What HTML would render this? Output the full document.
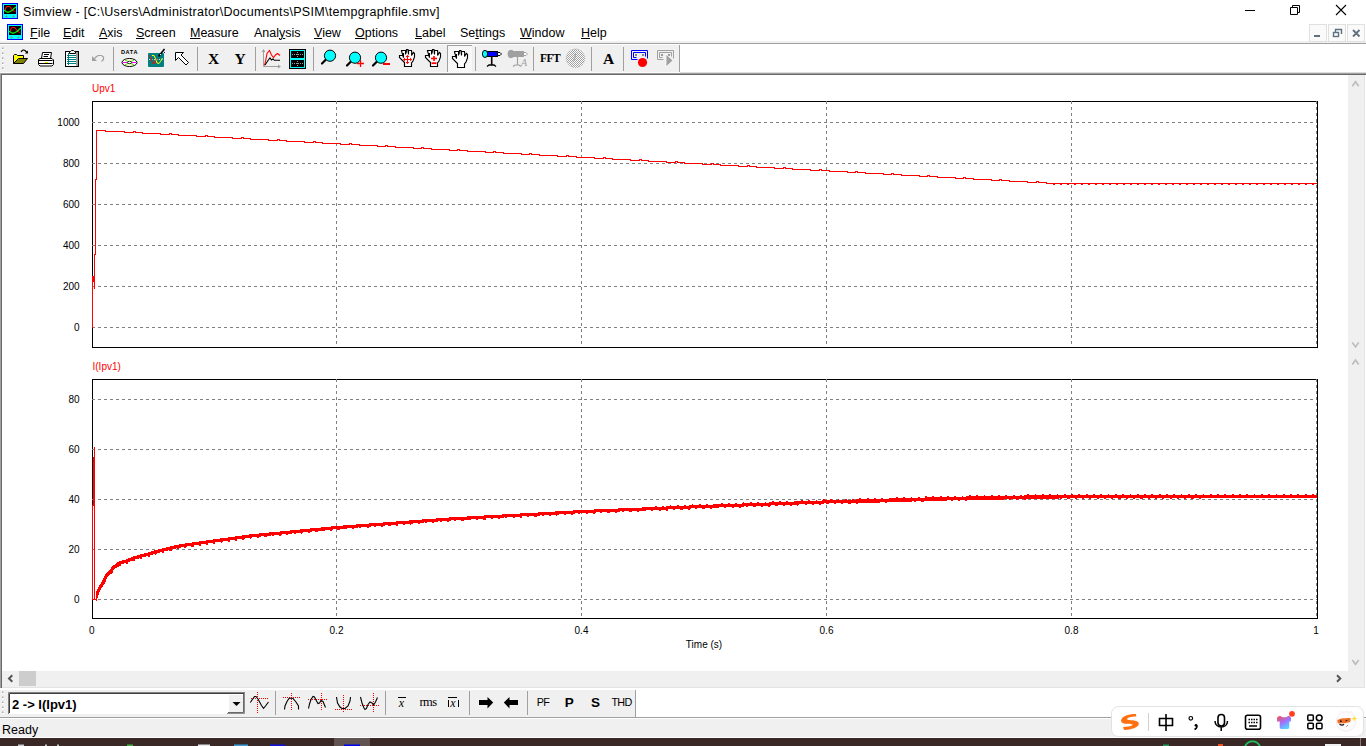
<!DOCTYPE html>
<html><head><meta charset="utf-8">
<style>
html,body{margin:0;padding:0;width:1366px;height:746px;overflow:hidden;background:#fff;font-family:"Liberation Sans",sans-serif;}
.a{position:absolute;}
.t{position:absolute;white-space:nowrap;line-height:1;}
.menu{font-size:12.5px;color:#000;top:27px;}
.menu u{text-decoration:underline;text-decoration-thickness:1px;text-underline-offset:1px;}
svg{position:absolute;left:0;top:0;}
.g{stroke:#808080;stroke-width:1;stroke-dasharray:3 3;shape-rendering:crispEdges;}
.fr{fill:none;stroke:#000;stroke-width:1;shape-rendering:crispEdges;}
.lab{font-size:10px;fill:#000;font-family:"Liberation Sans",sans-serif;}
</style></head><body>
<!-- title bar -->
<div class="a" style="left:0;top:0;width:1366px;height:22px;background:#fff"></div>
<div class="t" style="left:23px;top:6px;font-size:12.5px;letter-spacing:0.3px;color:#000">Simview - [C:\Users\Administrator\Documents\PSIM\tempgraphfile.smv]</div>
<!-- menu bar -->
<div class="a" style="left:0;top:41px;width:1366px;height:2px;background:#f0f0f0"></div>
<div class="a" style="left:0;top:43px;width:1366px;height:1px;background:#a0a0a0"></div>
<div class="t menu" style="left:30px"><u>F</u>ile</div>
<div class="t menu" style="left:63px"><u>E</u>dit</div>
<div class="t menu" style="left:99px"><u>A</u>xis</div>
<div class="t menu" style="left:136px"><u>S</u>creen</div>
<div class="t menu" style="left:190px"><u>M</u>easure</div>
<div class="t menu" style="left:254px">Anal<u>y</u>sis</div>
<div class="t menu" style="left:314px"><u>V</u>iew</div>
<div class="t menu" style="left:355px"><u>O</u>ptions</div>
<div class="t menu" style="left:415px"><u>L</u>abel</div>
<div class="t menu" style="left:460px">Se<u>t</u>tings</div>
<div class="t menu" style="left:520px"><u>W</u>indow</div>
<div class="t menu" style="left:581px"><u>H</u>elp</div>
<!-- toolbar -->
<div class="a" style="left:0;top:45px;width:679px;height:27px;background:#f0f0f0"></div>
<div class="a" style="left:679px;top:45px;width:1px;height:27px;background:#a0a0a0"></div>
<div class="a" style="left:0;top:72px;width:680px;height:1px;background:#fafafa"></div>
<div class="a" style="left:680px;top:72px;width:686px;height:1px;background:#dcdcdc"></div>
<div class="a" style="left:0;top:73px;width:1366px;height:1px;background:#a0a0a0"></div>
<div class="a" style="left:0;top:74px;width:1366px;height:1px;background:#696969"></div>
<!-- client -->
<div class="a" style="left:0;top:73px;width:1px;height:615px;background:#a0a0a0"></div>
<div class="a" style="left:1px;top:74px;width:1px;height:614px;background:#696969"></div>
<!-- vscroll -->
<div class="a" style="left:1348px;top:75px;width:17px;height:596px;background:#f0f0f0"></div>
<div class="a" style="left:1365px;top:75px;width:1px;height:613px;background:#fff"></div>
<!-- hscroll -->
<div class="a" style="left:2px;top:671px;width:1363px;height:16px;background:#f0f0f0"></div>
<div class="a" style="left:2px;top:687px;width:1363px;height:1px;background:#e3e3e3"></div>
<div class="a" style="left:1364px;top:75px;width:1px;height:613px;background:#e3e3e3"></div>
<div class="a" style="left:19px;top:671px;width:17px;height:15px;background:#cdcdcd"></div>
<!-- bottom toolbar -->
<div class="a" style="left:0;top:690px;width:636px;height:27px;background:#f0f0f0"></div>
<div class="a" style="left:0;top:717px;width:1366px;height:1px;background:#a0a0a0"></div>
<div class="a" style="left:0;top:718px;width:1366px;height:1px;background:#fff"></div>
<div class="a" style="left:0;top:719px;width:1366px;height:18px;background:#f0f0f0"></div>
<div class="a" style="left:0;top:737px;width:1366px;height:1px;background:#fff"></div>
<div class="t" style="left:2px;top:724px;font-size:12.5px;color:#000">Ready</div>
<!-- taskbar -->
<div class="a" style="left:0;top:738px;width:1366px;height:8px;background:#3a2826"></div>

<svg width="1366" height="746" viewBox="0 0 1366 746">
<!-- title icon -->
<g id="appicon">
<rect x="2.5" y="3.5" width="15" height="15" fill="#0ff" stroke="#00f"/>
<rect x="4" y="5" width="12" height="9" fill="#000"/>
<path d="M5.5,10.5 L5.5,8.5 L7,6.5 L9.5,6.5 L12,9.3 L13.5,11 L15.5,11.3" fill="none" stroke="#f00" stroke-width="1.1"/>
<path d="M4,10 L6,11.5 L8,12.3 L10,11.5 L12.5,10.2 L14,8.5 L16,6.8" fill="none" stroke="#0f0" stroke-width="1.1"/>
<path d="M5.5,16.5H7.5M6.5,15.5V17.5M12.5,16.5H14.5M13.5,15.5V17.5" stroke="#888" stroke-width="1"/>
</g>
<use href="#appicon" x="5" y="21"/>
<!-- gripper -->
<rect x="2" y="48.0" width="2" height="2" fill="#fff"/><rect x="2" y="47.5" width="1.5" height="1.5" fill="#a8a8a8"/>
<rect x="2" y="53.0" width="2" height="2" fill="#fff"/><rect x="2" y="52.5" width="1.5" height="1.5" fill="#a8a8a8"/>
<rect x="2" y="58.0" width="2" height="2" fill="#fff"/><rect x="2" y="57.5" width="1.5" height="1.5" fill="#a8a8a8"/>
<rect x="2" y="63.0" width="2" height="2" fill="#fff"/><rect x="2" y="62.5" width="1.5" height="1.5" fill="#a8a8a8"/>
<rect x="2" y="68.0" width="2" height="2" fill="#fff"/><rect x="2" y="67.5" width="1.5" height="1.5" fill="#a8a8a8"/>
<rect x="2" y="692.0" width="2" height="2" fill="#fff"/><rect x="2" y="691.5" width="1.5" height="1.5" fill="#a8a8a8"/>
<rect x="2" y="697.0" width="2" height="2" fill="#fff"/><rect x="2" y="696.5" width="1.5" height="1.5" fill="#a8a8a8"/>
<rect x="2" y="702.0" width="2" height="2" fill="#fff"/><rect x="2" y="701.5" width="1.5" height="1.5" fill="#a8a8a8"/>
<rect x="2" y="707.0" width="2" height="2" fill="#fff"/><rect x="2" y="706.5" width="1.5" height="1.5" fill="#a8a8a8"/>
<rect x="2" y="712.0" width="2" height="2" fill="#fff"/><rect x="2" y="711.5" width="1.5" height="1.5" fill="#a8a8a8"/>
<!-- separators -->
<g fill="#a0a0a0">
<rect x="113" y="47" width="1" height="24"/>
<rect x="197" y="47" width="1" height="24"/>
<rect x="255" y="47" width="1" height="24"/>
<rect x="313" y="47" width="1" height="24"/>
<rect x="475" y="47" width="1" height="24"/>
<rect x="533" y="47" width="1" height="24"/>
<rect x="591" y="47" width="1" height="24"/>
<rect x="623" y="47" width="1" height="24"/>
<rect x="275" y="691" width="1" height="24"/>
<rect x="385" y="691" width="1" height="24"/>
<rect x="469" y="691" width="1" height="24"/>
<rect x="527" y="691" width="1" height="24"/>
</g>
<!-- open -->
<g>
<path d="M13.5,63.5V55.5L14.5,54.5H16.5L17.5,55.5H23.5V58.5" fill="#ff0" stroke="#000"/>
<path d="M13.5,63.5 L18.5,58.5 H27.5 L23.5,63.5 Z" fill="#808000" stroke="#000"/>
<path d="M21,52 Q23,49 25,50.5 L27,52.5" fill="none" stroke="#000" stroke-width="1.2"/>
<path d="M25,53.5 H28 V50.5 Z" fill="#000"/>
</g>
<!-- print -->
<g>
<path d="M41.5,58.5 L42.5,52.5 H51.5 L50.5,58.5" fill="#fff" stroke="#000"/>
<path d="M44,54.5H49M43.5,56.5H48" stroke="#000"/>
<path d="M38.5,59.5 L40,58.5 H52 L53.5,60 V64.5 L52,66 H40 L38.5,64.5 Z" fill="#fff" stroke="#000"/>
<path d="M39,60.5H52.5M39,63.5H52.5" stroke="#000"/>
<rect x="45" y="62" width="3" height="1" fill="#ee0"/>
</g>
<!-- clipboard -->
<g>
<rect x="65.5" y="51.5" width="13" height="15" fill="#fff" stroke="#000"/>
<rect x="76" y="52" width="2" height="14" fill="#a0a0a0"/>
<path d="M69.5,53.5 V51.5 H70.5 L71.5,50.5 H73.5 L74.5,51.5 H75.5 V53.5 Z" fill="#fff" stroke="#000"/>
<path d="M67,55.5H76M67,57.5H76M67,59.5H76M67,61.5H76M67,63.5H76M68.5,53V65" stroke="#008080"/>
</g>
<!-- undo gray -->
<g>
<path d="M92,56 V61 H97 Z" fill="#a0a0a0"/>
<path d="M94.5,58.5 L96.5,56.5 L98.5,55.5 H101.5 L103.5,57 V59.5 L101.5,61.5" fill="none" stroke="#a0a0a0" stroke-width="1.2"/>
</g>
<!-- DATA -->
<g>
<text x="129.5" y="54" font-family="Liberation Sans" font-weight="bold" font-size="5.6" text-anchor="middle" letter-spacing="0.6" fill="#000">DATA</text>
<ellipse cx="129.5" cy="62.5" rx="7.5" ry="4" fill="#fff" stroke="#000"/>
<path d="M123,62.5H136" stroke="#f0f" stroke-width="1"/>
<path d="M125,60L134,65M125,65L134,60" stroke="#0c0" stroke-width="0.8"/>
<path d="M127,59.5L132,65.5M127,65.5L132,59.5" stroke="#ff0" stroke-width="0.9"/>
<ellipse cx="129.5" cy="62.5" rx="2" ry="1.2" fill="#fff" stroke="#000" stroke-width="0.8"/>
</g>
<!-- teal scope -->
<g>
<rect x="148" y="53" width="16" height="14" rx="1" fill="#008080"/>
<path d="M149,59.5H163" stroke="#fff" stroke-dasharray="1 1.5" stroke-width="0.8"/>
<path d="M149.5,55.5 L151.5,60 L153,63.5 H154.5 L156,60 L157.5,58.5" fill="none" stroke="#f00" stroke-width="1"/>
<path d="M152,55.5 H154 L155.5,58.5 L157,63 L159,63.5 L160.5,61.5 L162.5,58" fill="none" stroke="#ff0" stroke-width="1"/>
<path d="M158.5,56.5 L164.5,49" stroke="#000" stroke-width="1.6"/>
<rect x="160" y="54" width="1" height="1" fill="#fff"/>
<rect x="164" y="52" width="1" height="1" fill="#00f"/>
</g>
<!-- pointer -->
<path d="M175.5,52.5 H183.5 L181,55 L188.5,62.5 L186,65 L178.5,57.5 L175.5,60.5 Z" fill="#fff" stroke="#000"/>
<!-- X Y -->
<text x="213.5" y="64" font-family="Liberation Serif" font-weight="bold" font-size="15.5" text-anchor="middle" fill="#000">X</text>
<text x="240" y="64" font-family="Liberation Serif" font-weight="bold" font-size="15.5" text-anchor="middle" fill="#000">Y</text>
<!-- graph -->
<g>
<path d="M263.5,66.5V50M263.5,66.5H280" stroke="#a0a0a0" stroke-width="1"/>
<path d="M261.5,52 L263.5,49 L265.5,52 Z M278,64.5 L281,66.5 L278,68.5 Z" fill="#a0a0a0"/>
<path d="M264.5,65.5 L266,59 L267,53.5 L269.5,50.5 L271.5,55 L273.5,57.5 L275.5,55 L277.5,53.5 L280,55.5" fill="none" stroke="#f00" stroke-width="1.1"/>
<path d="M265,65 L268,60.5 L270,58 L271.5,60 L273,59 L274.5,60.3 H280" fill="none" stroke="#000" stroke-width="1.1"/>
</g>
<!-- panel -->
<g>
<rect x="289" y="49" width="17" height="20" fill="#000"/>
<rect x="290" y="50" width="15" height="18" fill="#0ff"/>
<rect x="291" y="51" width="13" height="7" fill="#000"/>
<rect x="291" y="60" width="13" height="7" fill="#000"/>
<path d="M292,54.5H304M292,63.5H304M297.5,52V58M297.5,61V67" stroke="#999" stroke-width="1" stroke-dasharray="1 1"/>
</g>
<!-- magnifiers -->
<g id="mag">
<path d="M326,59.5 L322,63.5" stroke="#000" stroke-width="2.2" stroke-linecap="round"/>
<circle cx="330" cy="55.7" r="5.6" fill="#0ff" stroke="#000" stroke-width="1"/>
</g>
<use href="#mag" x="25" y="2"/>
<path d="M357,63.5H364M360.5,60V67" stroke="#f00" stroke-width="1.3"/>
<use href="#mag" x="51" y="2"/>
<rect x="383" y="63" width="7" height="2" fill="#f00"/>
<!-- pressed button -->
<defs>
<pattern id="chk" width="2" height="2" patternUnits="userSpaceOnUse"><rect width="2" height="2" fill="#f0f0f0"/><rect width="1" height="1" fill="#fff"/><rect x="1" y="1" width="1" height="1" fill="#fff"/></pattern>
<pattern id="chk2" width="2" height="2" patternUnits="userSpaceOnUse"><rect width="2" height="2" fill="#fff"/><rect width="1" height="1" fill="#a0a0a0"/><rect x="1" y="1" width="1" height="1" fill="#a0a0a0"/></pattern>
</defs>
<rect x="447" y="45" width="25" height="27" fill="url(#chk)"/>
<rect x="447" y="45" width="25" height="1" fill="#a0a0a0"/>
<rect x="447" y="45" width="1" height="27" fill="#a0a0a0"/>
<!-- hands -->
<g id="hand">
<path d="M452.5,56.5 L456,56.5 L456.5,58.5 L455,53.5 L454.5,51.5 L458.5,51.5 L459,54.5 L459.5,50.5 L461,50.5 L461.5,55 L461.5,51.5 L464.5,51.5 L465,55.5 L466.5,53.5 L467.5,54.5 L467.5,58 L466,62 L464.5,64 L464.5,67.5 L457.5,67.5 L457.5,63.5 L452.5,58.5 Z" fill="#fff" stroke="#000" stroke-width="1.15"/>
<path d="M458.5,51.5V55.5M461.5,51V55.5M464.7,54V56.5M456.5,54V58.5" stroke="#000" stroke-width="1.1"/>
</g>
<use href="#hand" x="-53" y="-1"/>
<path d="M403.5,59.5H411.5M407.5,55.5V63.5" stroke="#f00" stroke-width="1.1"/>
<path d="M403,59.5l2,-2v4zM412,59.5l-2,-2v4zM407.5,55l-2,2h4zM407.5,64l-2,-2h4z" fill="#f00"/>
<use href="#hand" x="-27" y="-1"/>
<path d="M431,58.5H437M434,56V61" stroke="#f00" stroke-width="1.6"/>
<rect x="431.5" y="62.3" width="5" height="1.8" fill="#f00"/>
<!-- telescope -->
<g>
<path d="M491.7,56V65" stroke="#000" stroke-width="1.6"/><path d="M487,66.5 L489,65 H494 L496,66.5" stroke="#000" stroke-width="1.3" fill="none" stroke-linejoin="miter"/>
<rect x="487.5" y="51.5" width="10" height="5" fill="#00f" stroke="#000"/>
<path d="M497.5,52.5 H500 L501.5,54 L500,55.5 H497.5 Z" fill="#fff" stroke="#000" stroke-width="1"/>
<ellipse cx="485" cy="53.9" rx="2.6" ry="3.6" fill="#0ff" stroke="#000" stroke-width="1"/>
</g>
<g fill="#a0a0a0" stroke="#a0a0a0">
<path d="M517.5,56V64.5M513,66.5 L515,65 H519 L521,66.5" stroke-width="1.2" fill="none"/>
<rect x="513.5" y="51.5" width="10" height="5"/>
<path d="M523.5,52.5 H526 L527.5,54 L526,55.5 H523.5 Z" fill="#fff"/>
<ellipse cx="511" cy="54" rx="3" ry="3.8" stroke-width="1"/>
</g>
<text x="521" y="66" font-family="Liberation Serif" font-style="italic" font-size="10" fill="#a0a0a0">A</text>
<!-- FFT -->
<text x="550" y="62" font-family="Liberation Serif" font-weight="bold" font-size="11.5" text-anchor="middle" letter-spacing="-0.6" fill="#000">FFT</text>
<circle cx="575.5" cy="58.3" r="9.3" fill="url(#chk2)" stroke="#a8a8a8" stroke-width="0.8" stroke-dasharray="1 1"/><path d="M575.5,53.3 L575,57.5 L573.5,60.5" stroke="#a0a0a0" stroke-width="1.1" fill="none"/>
<!-- A -->
<text x="608.5" y="64" font-family="Liberation Serif" font-weight="bold" font-size="15.5" text-anchor="middle" fill="#000">A</text>
<!-- record -->
<g id="rec" fill="none" stroke="#00f">
<path d="M637.5,59.5H631.5V50.5H647.5V58.5"/>
<path d="M636.5,57.5H633.5V52.5H645.5V56.5"/>
</g>
<rect x="635" y="54" width="2" height="2" fill="#888"/><rect x="642" y="54" width="2" height="2" fill="#888"/>
<circle cx="642.5" cy="62.5" r="4.6" fill="#f00"/>
<g fill="none" stroke="#a0a0a0">
<path d="M663.5,59.5H657.5V50.5H673.5V58.5"/>
<path d="M662.5,57.5H659.5V52.5H671.5V56.5"/>
</g>
<rect x="661" y="54" width="2" height="2" fill="#999"/><rect x="668" y="54" width="2" height="2" fill="#999"/>
<path d="M666,54 V67 L673,60.5 Z" fill="#a0a0a0" stroke="#fff" stroke-width="0.8"/>
<!-- window buttons -->
<path d="M1245,10.5H1255" stroke="#000" stroke-width="1"/>
<path d="M1290.5,7.5H1297.5V14.5H1290.5Z M1292.5,7.5V5.5H1299.5V12.5H1297.5" fill="none" stroke="#000" stroke-width="1"/>
<path d="M1336,5 L1346,15 M1346,5 L1336,15" stroke="#000" stroke-width="1.1"/>
<!-- MDI buttons -->
<g fill="#fafafa" stroke="#e0e0e0">
<rect x="1309.5" y="24.5" width="17" height="17"/>
<rect x="1328.5" y="24.5" width="17" height="17"/>
<rect x="1347.5" y="24.5" width="17" height="17"/>
</g>
<rect x="1314" y="35" width="6" height="2" fill="#5f7080"/>
<path d="M1335.5,32 V29.5 H1341.5 V34" fill="none" stroke="#5f7080" stroke-width="1.4"/>
<rect x="1333.5" y="32.5" width="5" height="4" fill="none" stroke="#5f7080" stroke-width="1.4"/>
<path d="M1353,30 L1359.5,36.5 M1359.5,30 L1353,36.5" stroke="#5f7080" stroke-width="1.8"/>

<!-- scroll arrows -->
<path d="M12.3,675.2 L9,678.5 L12.3,681.8" fill="none" stroke="#555" stroke-width="2"/>
<path d="M1337,675.2 L1340.3,678.5 L1337,681.8" fill="none" stroke="#555" stroke-width="2"/>
<path d="M1352.3,86.3 L1355.5,81.8 L1358.7,86.3" fill="none" stroke="#bdbdbd" stroke-width="1.7"/>
<path d="M1352.3,342.4 L1355.5,346.9 L1358.7,342.4" fill="none" stroke="#bdbdbd" stroke-width="1.7"/>
<path d="M1352.3,364.4 L1355.5,359.9 L1358.7,364.4" fill="none" stroke="#bdbdbd" stroke-width="1.7"/>
<path d="M1352.3,660 L1355.5,664.3 L1358.7,660" fill="none" stroke="#bdbdbd" stroke-width="1.7"/>
<!-- combo -->
<rect x="8" y="692" width="237" height="22" fill="#fff"/>
<path d="M8.5,714V692.5H245" stroke="#808080" fill="none"/>
<path d="M9.5,713V693.5H244" stroke="#404040" fill="none"/>
<rect x="228" y="694" width="16" height="19" fill="#f0f0f0"/>
<path d="M228.5,712V694.5H243" stroke="#fff" fill="none"/>
<path d="M228,712.5H243.5V694" stroke="#696969" fill="none"/>
<path d="M227,713.5H244.5V693" stroke="#404040" fill="none" opacity="0.6"/>
<path d="M232.5,702 H240.5 L236.5,706 Z" fill="#000"/>
<text x="12" y="709" font-family="Liberation Sans" font-weight="bold" font-size="13" fill="#000">2 -&gt; I(Ipv1)</text>
<!-- sine -->
<g fill="none" stroke="#f00" stroke-width="1" stroke-dasharray="1 1">
<path d="M257.5,692V713M251,698.5H268"/>
<path d="M291.5,693V710M283,697.5H300"/>
<path d="M321.5,693V711M308,699.5H327"/>
<path d="M343.5,695V713M335,709.5H352"/>
<path d="M373.5,693V712M360,705.5H379"/>
</g>
<g fill="none" stroke="#000" stroke-width="1.1">
<path d="M250.3,702.5 L254.5,696.5 H256 L258,699 L261.5,705.5 L263.5,708.3 L265.5,706 L268.5,702"/>
<path d="M284.5,709.5 L285,706 L287,701.5 L289,698.5 L291,698 L293,698.5 L296,702 L298.5,706 L298.5,709.5"/>
<path d="M308.5,708.5 L309.5,704 L311,699.5 L313,696.5 L314.5,697 L316,700 L318,703.5 L319.5,703 L321,700.5 L323,701.5 L325.5,707.5"/>
<path d="M336.5,697 L337.5,703 L340,707 L342,708.5 H345 L348,706 L350,701 L350.5,697"/>
<path d="M360.5,697 L362,703 L364,708 L365,709.5 L366.5,708.5 L368,704.5 L370,702 L372,703 L373.5,705 L375.5,702 L377.5,697.5"/>
</g>
<!-- xbar rms |xbar| -->
<path d="M398,697.5H406M448,697.5H457" stroke="#000" stroke-width="1"/>
<text x="401.5" y="707" font-family="Liberation Serif" font-style="italic" font-size="12" text-anchor="middle" fill="#000">x</text>
<text x="428" y="706" font-family="Liberation Serif" font-size="12.5" text-anchor="middle" letter-spacing="-0.5" fill="#000">rms</text>
<text x="453" y="707" font-family="Liberation Serif" font-style="italic" font-size="12" text-anchor="middle" fill="#000">x</text>
<path d="M448.5,700V707M458.5,700V707" stroke="#000" stroke-width="1"/>
<!-- arrows -->
<path d="M479,700 H487.5 V697 L493.2,702.5 L487.5,708.5 V705 H479 Z" fill="#000"/>
<path d="M518,700 H509.5 V697 L503.8,702.5 L509.5,708.5 V705 H518 Z" fill="#000"/>
<!-- PF P S THD -->
<text x="543" y="706" font-family="Liberation Sans" font-size="10.8" text-anchor="middle" letter-spacing="-0.6" fill="#000">PF</text>
<text x="569.3" y="707" font-family="Liberation Sans" font-weight="bold" font-size="13.5" text-anchor="middle" fill="#000">P</text>
<text x="595.5" y="707" font-family="Liberation Sans" font-weight="bold" font-size="13.5" text-anchor="middle" fill="#000">S</text>
<text x="621.5" y="706" font-family="Liberation Sans" font-size="10.8" text-anchor="middle" letter-spacing="-0.7" fill="#000">THD</text>
<rect x="635" y="690" width="1" height="27" fill="#a0a0a0"/>
<!-- taskbar bits -->
<rect x="334" y="738" width="36" height="8" fill="#615351"/>
<rect x="344" y="744.5" width="16" height="1.5" fill="#0000f0"/>
<rect x="18" y="744.5" width="6" height="1.5" fill="#c8c8c8"/>
<rect x="45" y="744.5" width="2" height="1.5" fill="#c8c8c8"/><rect x="57" y="744.5" width="2" height="1.5" fill="#c8c8c8"/>
<rect x="127" y="744.5" width="6" height="1.5" fill="#40b040"/>
<rect x="198" y="744.5" width="12" height="1.5" fill="#e8e8e8"/>
<rect x="234" y="744.5" width="14" height="1.5" fill="#3aa0e0"/>
<rect x="270" y="744.5" width="15" height="1.5" fill="#1010e0"/>
<rect x="1163" y="744.5" width="6" height="1.5" fill="#20a060"/>
<rect x="1218" y="744" width="5" height="2" fill="#f05020"/>
<path d="M1245,746.5 A8,8 0 0 1 1260,746.5" fill="none" stroke="#20c060" stroke-width="1.8"/>
<rect x="1325" y="744" width="16" height="2" fill="#f0f0f0"/>
<rect x="1360" y="738" width="1" height="8" fill="#8a7a78"/>
<!-- IME panel -->
<rect x="1111.5" y="706.5" width="252" height="30" rx="7" fill="#fff" stroke="#e2e2e2"/>
<path d="M1136,714.1 L1136.3,716.4 C1131,716.6 1127,717.5 1127,719.3 C1127.5,720.3 1131,720.2 1134,720.4 C1137.5,720.8 1139,722 1138.8,724 C1138.2,727.5 1132,729.6 1124,730 L1123.1,727 C1128,726.8 1132.5,726 1132.7,724.8 C1132.5,723.6 1128,724 1125,723.7 C1122,723.3 1120.9,722 1121.1,720.5 C1121.5,716.5 1128,714 1136,714.1 Z" fill="#ff7010"/>
<rect x="1148" y="713" width="1" height="18" fill="#d0d0d0"/>
<path d="M1159.5,718.5H1172.5V725.5H1159.5Z M1166,714V731" fill="none" stroke="#000" stroke-width="1.6"/>
<circle cx="1190.8" cy="718.3" r="1.8" fill="none" stroke="#000" stroke-width="1.2"/>
<circle cx="1196" cy="725.3" r="1.4" fill="#000"/><path d="M1197,725.5 C1197.2,727.5 1196,728.8 1194.5,729.5" fill="none" stroke="#000" stroke-width="1.5"/>
<rect x="1218" y="714.5" width="6.5" height="11.5" rx="3.2" fill="none" stroke="#000" stroke-width="1.6"/>
<path d="M1215,721 C1215,729 1227.5,729 1227.5,721 M1221.2,727.5V731" fill="none" stroke="#000" stroke-width="1.5"/>
<rect x="1245.5" y="715.2" width="15" height="14" rx="2" fill="none" stroke="#000" stroke-width="1.6"/>
<path d="M1248.5,719.5h1.5m1,0h1.5m1,0h1.5m1,0h1.5M1248.5,722.5h1.5m1,0h1.5m1,0h1.5m1,0h1.5M1249,726H1257" stroke="#000" stroke-width="1.3"/>
<defs><linearGradient id="shirt" x1="0" y1="0" x2="0.6" y2="1"><stop offset="0" stop-color="#f85040"/><stop offset="0.55" stop-color="#a070ff"/><stop offset="1" stop-color="#50d8ff"/></linearGradient></defs>
<path d="M1277,718 Q1278,715.6 1280.5,716 L1282.5,717.3 H1286 L1288.3,716 Q1290.8,715.6 1291,718 V721.6 H1289.3 V727.6 Q1289.3,729 1287.8,729 H1281.2 Q1279.7,729 1279.7,727.6 V721.6 H1277 Z" fill="url(#shirt)"/>
<circle cx="1292" cy="713.8" r="2.9" fill="#ff4020"/>
<g fill="none" stroke="#000" stroke-width="1.5">
<rect x="1307.8" y="715" width="5.5" height="5.5" rx="1"/>
<circle cx="1319.2" cy="717.8" r="2.9"/>
<rect x="1307.8" y="723.3" width="5.5" height="5.5" rx="1"/>
<rect x="1316.5" y="723.3" width="5.5" height="5.5" rx="1"/>
</g>
<circle cx="1346" cy="721.5" r="9.8" fill="#fefcfc" stroke="#efe4ee" stroke-width="0.7"/>
<path d="M1339,714 L1340.5,711.3 L1343,713 M1349,713 L1351.5,711.3 L1352.5,714" fill="#fff" stroke="#ece6f4" stroke-width="0.7"/>
<path d="M1337.2,720.5 C1337.5,718.8 1344,718 1350.3,718 C1351,719.5 1350.8,721.5 1349.5,722.3 C1345,723.3 1340,723.8 1337.8,723.3 Z" fill="#f07028"/>
<circle cx="1340.8" cy="721.2" r="0.9" fill="#111"/><path d="M1345.5,721 l2,-0.8" stroke="#111" stroke-width="0.9"/>
<path d="M1339.5,724.3 C1341,725.3 1343,725.2 1344,724.3" stroke="#111" stroke-width="1.2" fill="none"/>
<path d="M1346.5,726.5 l1.2,-1.2" stroke="#333" stroke-width="0.7"/>
<path d="M1354.3,715.8 l0.9,2 l2,0.8 l-2,0.8 l-0.9,2 l-0.9,-2 l-2,-0.8 l2,-0.8 z" fill="#ffe040"/>

<rect x="92.5" y="101.5" width="1225" height="246" class="fr"/>
<rect x="92.5" y="379.5" width="1225" height="239" class="fr"/>
<line x1="92" y1="122.5" x2="1317" y2="122.5" class="g"/>
<line x1="92" y1="163.5" x2="1317" y2="163.5" class="g"/>
<line x1="92" y1="204.5" x2="1317" y2="204.5" class="g"/>
<line x1="92" y1="245.5" x2="1317" y2="245.5" class="g"/>
<line x1="92" y1="286.5" x2="1317" y2="286.5" class="g"/>
<line x1="92" y1="327.5" x2="1317" y2="327.5" class="g"/>
<line x1="92" y1="399.5" x2="1317" y2="399.5" class="g"/>
<line x1="92" y1="449.5" x2="1317" y2="449.5" class="g"/>
<line x1="92" y1="499.5" x2="1317" y2="499.5" class="g"/>
<line x1="92" y1="549.5" x2="1317" y2="549.5" class="g"/>
<line x1="92" y1="599.5" x2="1317" y2="599.5" class="g"/>
<line x1="336.5" y1="101" x2="336.5" y2="347" class="g"/>
<line x1="336.5" y1="379" x2="336.5" y2="618" class="g"/>
<line x1="581.5" y1="101" x2="581.5" y2="347" class="g"/>
<line x1="581.5" y1="379" x2="581.5" y2="618" class="g"/>
<line x1="826.5" y1="101" x2="826.5" y2="347" class="g"/>
<line x1="826.5" y1="379" x2="826.5" y2="618" class="g"/>
<line x1="1071.5" y1="101" x2="1071.5" y2="347" class="g"/>
<line x1="1071.5" y1="379" x2="1071.5" y2="618" class="g"/>
<line x1="1316.5" y1="101" x2="1316.5" y2="347" class="g"/>
<line x1="1316.5" y1="379" x2="1316.5" y2="618" class="g"/>
<rect x="92" y="276" width="2" height="6" fill="#f00"/>
<path d="M92.5,327.5V276.5M94.5,289V254.5H95.5V179.5H96.5V130.5H105.5V131.5H124.5V132.5H133.5V131.5H135.5V132.5H142.5V133.5H160.5V134.5H169.5V133.5H171.5V134.5H178.5V135.5H196.5V136.5H205.5V135.5H207.5V136.5H214.5V137.5H232.5V138.5H241.5V137.5H243.5V138.5H250.5V139.5H268.5V140.5H277.5V139.5H279.5V140.5H286.5V141.5H304.5V142.5H313.5V141.5H315.5V142.5H322.5V143.5H340.5V144.5H349.5V143.5H351.5V144.5H359.5V145.5H377.5V146.5H385.5V145.5H387.5V146.5H395.5V147.5H413.5V148.5H421.5V147.5H423.5V148.5H431.5V149.5H449.5V150.5H457.5V149.5H459.5V150.5H467.5V151.5H485.5V152.5H493.5V151.5H495.5V152.5H503.5V153.5H521.5V154.5H529.5V153.5H531.5V154.5H539.5V155.5H557.5V156.5H566.5V155.5H568.5V156.5H576.5V157.5H594.5V158.5H603.5V157.5H605.5V158.5H612.5V159.5H630.5V160.5H639.5V159.5H641.5V160.5H648.5V161.5H666.5V162.5H675.5V161.5H677.5V162.5H684.5V163.5H702.5V164.5H711.5V163.5H713.5V164.5H720.5V165.5H738.5V166.5H747.5V165.5H749.5V166.5H756.5V167.5H774.5V168.5H783.5V167.5H785.5V168.5H792.5V169.5H810.5V170.5H819.5V169.5H821.5V170.5H829.5V171.5H847.5V172.5H855.5V171.5H857.5V172.5H865.5V173.5H883.5V174.5H891.5V173.5H893.5V174.5H901.5V175.5H919.5V176.5H927.5V175.5H929.5V176.5H937.5V177.5H955.5V178.5H963.5V177.5H965.5V178.5H973.5V179.5H991.5V180.5H999.5V179.5H1001.5V180.5H1009.5V181.5H1027.5V182.5H1036.5V181.5H1038.5V182.5H1046.5V183.5H1053.5V184.5H1054.5V183.5H1060.5V184.5H1061.5V183.5H1067.5V184.5H1068.5V183.5H1074.5V184.5H1075.5V183.5H1081.5V184.5H1082.5V183.5H1088.5V184.5H1089.5V183.5H1095.5V184.5H1096.5V183.5H1102.5V184.5H1103.5V183.5H1109.5V184.5H1110.5V183.5H1116.5V184.5H1117.5V183.5H1123.5V184.5H1124.5V183.5H1130.5V184.5H1131.5V183.5H1137.5V184.5H1138.5V183.5H1144.5V184.5H1145.5V183.5H1151.5V184.5H1152.5V183.5H1158.5V184.5H1159.5V183.5H1165.5V184.5H1166.5V183.5H1172.5V184.5H1173.5V183.5H1179.5V184.5H1180.5V183.5H1186.5V184.5H1187.5V183.5H1193.5V184.5H1194.5V183.5H1200.5V184.5H1201.5V183.5H1207.5V184.5H1208.5V183.5H1214.5V184.5H1215.5V183.5H1221.5V184.5H1222.5V183.5H1228.5V184.5H1229.5V183.5H1235.5V184.5H1236.5V183.5H1242.5V184.5H1243.5V183.5H1249.5V184.5H1250.5V183.5H1256.5V184.5H1257.5V183.5H1263.5V184.5H1264.5V183.5H1270.5V184.5H1271.5V183.5H1277.5V184.5H1278.5V183.5H1284.5V184.5H1285.5V183.5H1291.5V184.5H1292.5V183.5H1298.5V184.5H1299.5V183.5H1305.5V184.5H1306.5V183.5H1312.5V184.5H1313.5V183.5H1316.5" fill="none" stroke="#f00" stroke-width="1" shape-rendering="crispEdges"/>
<path d="M92.5,599V505.5H93.5V457M94.5,447V599M92,599.5H97" fill="none" stroke="#f00" stroke-width="1" shape-rendering="crispEdges"/>
<path d="M96.5,591V601M97.5,589V598M98.5,587V595M99.5,585V592M100.5,584V590M101.5,582V588M102.5,580V587M103.5,578V585M104.5,576V584M105.5,574V582M106.5,573V579M107.5,572V577M108.5,571V576M109.5,570V575M110.5,569V574M111.5,567V574M112.5,566V573M113.5,565V570M114.5,565V569M115.5,564V568M116.5,563V568M117.5,562V567M118.5,562V567M119.5,561V566M120.5,561V566M121.5,561V564M122.5,560V564M123.5,560V564M124.5,560V563M125.5,560V563M126.5,559V564M127.5,559V564M128.5,558V562M129.5,558V562M130.5,558V561M131.5,557V561M132.5,557V561M133.5,556V561M134.5,556V561M135.5,556V559M136.5,556V559M137.5,555V559M138.5,555V559M139.5,555V558M140.5,554V559M141.5,554V559M142.5,554V557M143.5,554V557M144.5,553V557M145.5,553V557M146.5,553V556M147.5,553V556M148.5,552V557M149.5,552V557M150.5,552V555M151.5,551V555M152.5,551V555M153.5,551V554M154.5,550V554M155.5,550V555M156.5,550V554M157.5,550V553M158.5,549V553M159.5,549V553M160.5,549V552M161.5,549V552M162.5,548V553M163.5,548V553M164.5,548V551M165.5,548V551M166.5,547V551M167.5,547V551M168.5,547V550M169.5,547V551M170.5,546V551M171.5,546V551M172.5,546V549M173.5,546V549M174.5,545V549M175.5,545V549M176.5,545V548M177.5,545V549M178.5,545V549M179.5,544V548M180.5,544V548M181.5,544V547M182.5,544V547M183.5,544V547M184.5,544V548M185.5,543V548M186.5,543V547M187.5,543V546M188.5,543V546M189.5,543V546M190.5,543V546M191.5,543V547M192.5,542V547M193.5,542V547M194.5,542V545M195.5,542V545M196.5,542V545M197.5,542V545M198.5,542V545M199.5,541V546M200.5,541V546M201.5,541V544M202.5,541V544M203.5,541V544M204.5,541V544M205.5,541V544M206.5,540V545M207.5,540V545M208.5,540V543M209.5,540V543M210.5,540V543M211.5,540V543M212.5,540V543M213.5,539V544M214.5,539V544M215.5,539V542M216.5,539V542M217.5,539V542M218.5,539V542M219.5,539V542M220.5,538V542M221.5,538V543M222.5,538V542M223.5,538V541M224.5,538V541M225.5,538V541M226.5,538V541M227.5,538V541M228.5,537V542M229.5,537V542M230.5,537V540M231.5,537V540M232.5,537V540M233.5,537V540M234.5,537V540M235.5,536V541M236.5,536V541M237.5,536V539M238.5,536V539M239.5,536V539M240.5,536V539M241.5,536V539M242.5,535V540M243.5,535V540M244.5,535V539M245.5,535V538M246.5,535V538M247.5,535V538M248.5,535V538M249.5,534V538M250.5,534V539M251.5,534V538M252.5,534V537M253.5,534V537M254.5,534V537M255.5,534V537M256.5,534V537M257.5,534V538M258.5,534V538M259.5,533V537M260.5,533V537M261.5,533V536M262.5,533V536M263.5,533V536M264.5,533V537M265.5,533V537M266.5,533V537M267.5,533V536M268.5,533V536M269.5,532V536M270.5,532V536M271.5,532V535M272.5,532V536M273.5,532V536M274.5,532V535M275.5,532V535M276.5,532V535M277.5,532V535M278.5,532V535M279.5,532V536M280.5,531V536M281.5,531V535M282.5,531V534M283.5,531V534M284.5,531V534M285.5,531V534M286.5,531V535M287.5,531V535M288.5,531V534M289.5,531V534M290.5,530V534M291.5,530V534M292.5,530V533M293.5,530V533M294.5,530V534M295.5,530V534M296.5,530V533M297.5,530V533M298.5,530V533M299.5,530V533M300.5,529V533M301.5,529V534M302.5,529V533M303.5,529V532M304.5,529V532M305.5,529V532M306.5,529V532M307.5,529V532M308.5,529V533M309.5,529V533M310.5,528V532M311.5,528V532M312.5,528V531M313.5,528V531M314.5,528V531M315.5,528V532M316.5,528V532M317.5,528V532M318.5,528V531M319.5,528V531M320.5,528V531M321.5,527V531M322.5,527V531M323.5,527V531M324.5,527V531M325.5,527V530M326.5,527V530M327.5,527V530M328.5,527V530M329.5,527V530M330.5,527V531M331.5,526V531M332.5,526V530M333.5,526V529M334.5,526V529M335.5,526V529M336.5,526V529M337.5,526V530M338.5,526V530M339.5,526V530M340.5,526V529M341.5,526V529M342.5,526V529M343.5,525V529M344.5,525V529M345.5,525V529M346.5,525V529M347.5,525V528M348.5,525V528M349.5,525V528M350.5,525V528M351.5,525V528M352.5,525V529M353.5,525V529M354.5,525V528M355.5,525V528M356.5,524V528M357.5,524V528M358.5,524V527M359.5,524V528M360.5,524V528M361.5,524V527M362.5,524V527M363.5,524V527M364.5,524V527M365.5,524V527M366.5,524V527M367.5,524V528M368.5,524V528M369.5,523V527M370.5,523V527M371.5,523V526M372.5,523V526M373.5,523V526M374.5,523V527M375.5,523V527M376.5,523V526M377.5,523V526M378.5,523V526M379.5,523V526M380.5,523V526M381.5,523V527M382.5,523V527M383.5,522V526M384.5,522V526M385.5,522V525M386.5,522V525M387.5,522V525M388.5,522V526M389.5,522V526M390.5,522V526M391.5,522V525M392.5,522V525M393.5,522V525M394.5,522V525M395.5,522V525M396.5,521V526M397.5,521V526M398.5,521V524M399.5,521V524M400.5,521V524M401.5,521V524M402.5,521V524M403.5,521V525M404.5,521V525M405.5,521V524M406.5,521V524M407.5,521V524M408.5,521V524M409.5,520V524M410.5,520V525M411.5,520V524M412.5,520V524M413.5,520V523M414.5,520V523M415.5,520V523M416.5,520V523M417.5,520V523M418.5,520V524M419.5,520V524M420.5,520V523M421.5,520V523M422.5,519V523M423.5,519V523M424.5,519V522M425.5,519V523M426.5,519V523M427.5,519V522M428.5,519V522M429.5,519V522M430.5,519V522M431.5,519V522M432.5,519V523M433.5,519V523M434.5,519V522M435.5,519V522M436.5,518V522M437.5,518V522M438.5,518V521M439.5,518V521M440.5,518V522M441.5,518V522M442.5,518V521M443.5,518V521M444.5,518V521M445.5,518V521M446.5,518V521M447.5,518V522M448.5,518V522M449.5,517V521M450.5,517V521M451.5,517V520M452.5,517V520M453.5,517V520M454.5,517V521M455.5,517V521M456.5,517V520M457.5,517V520M458.5,517V520M459.5,517V520M460.5,517V520M461.5,517V521M462.5,517V521M463.5,517V521M464.5,517V520M465.5,517V520M466.5,517V520M467.5,516V520M468.5,516V520M469.5,516V520M470.5,516V520M471.5,516V519M472.5,516V519M473.5,516V519M474.5,516V519M475.5,516V519M476.5,516V520M477.5,516V520M478.5,516V519M479.5,516V519M480.5,516V519M481.5,516V519M482.5,516V519M483.5,516V520M484.5,515V520M485.5,515V520M486.5,515V518M487.5,515V518M488.5,515V518M489.5,515V518M490.5,515V518M491.5,515V519M492.5,515V519M493.5,515V518M494.5,515V518M495.5,515V518M496.5,515V518M497.5,515V518M498.5,515V519M499.5,515V519M500.5,515V518M501.5,515V518M502.5,514V518M503.5,514V518M504.5,514V517M505.5,514V518M506.5,514V518M507.5,514V517M508.5,514V517M509.5,514V517M510.5,514V517M511.5,514V517M512.5,514V517M513.5,514V518M514.5,514V518M515.5,514V517M516.5,514V517M517.5,514V517M518.5,514V517M519.5,514V517M520.5,513V518M521.5,513V518M522.5,513V516M523.5,513V516M524.5,513V516M525.5,513V516M526.5,513V516M527.5,513V517M528.5,513V517M529.5,513V516M530.5,513V516M531.5,513V516M532.5,513V516M533.5,513V516M534.5,513V517M535.5,513V517M536.5,513V517M537.5,513V516M538.5,512V516M539.5,512V516M540.5,512V515M541.5,512V515M542.5,512V516M543.5,512V516M544.5,512V515M545.5,512V515M546.5,512V515M547.5,512V515M548.5,512V515M549.5,512V516M550.5,512V516M551.5,512V515M552.5,512V515M553.5,512V515M554.5,512V515M555.5,511V515M556.5,511V516M557.5,511V515M558.5,511V515M559.5,511V514M560.5,511V514M561.5,511V514M562.5,511V514M563.5,511V514M564.5,511V515M565.5,511V515M566.5,511V514M567.5,511V514M568.5,511V514M569.5,511V514M570.5,511V514M571.5,511V515M572.5,511V515M573.5,510V514M574.5,510V514M575.5,510V513M576.5,510V513M577.5,510V513M578.5,510V514M579.5,510V514M580.5,510V513M581.5,510V513M582.5,510V513M583.5,510V513M584.5,510V513M585.5,510V513M586.5,510V514M587.5,510V514M588.5,510V513M589.5,510V513M590.5,510V513M591.5,510V513M592.5,510V513M593.5,510V514M594.5,509V514M595.5,509V513M596.5,509V512M597.5,509V512M598.5,509V512M599.5,509V512M600.5,509V513M601.5,509V513M602.5,509V512M603.5,509V512M604.5,509V512M605.5,509V512M606.5,509V512M607.5,509V513M608.5,509V513M609.5,509V513M610.5,509V512M611.5,509V512M612.5,509V512M613.5,509V512M614.5,509V512M615.5,509V513M616.5,509V513M617.5,509V512M618.5,508V512M619.5,508V512M620.5,508V511M621.5,508V511M622.5,508V512M623.5,508V512M624.5,508V511M625.5,508V511M626.5,508V511M627.5,508V511M628.5,508V511M629.5,508V512M630.5,508V512M631.5,508V512M632.5,508V511M633.5,508V511M634.5,508V511M635.5,508V511M636.5,508V511M637.5,508V512M638.5,508V512M639.5,508V511M640.5,508V511M641.5,508V511M642.5,507V511M643.5,507V511M644.5,507V511M645.5,507V511M646.5,507V510M647.5,507V510M648.5,507V510M649.5,507V510M650.5,507V510M651.5,507V511M652.5,507V511M653.5,507V510M654.5,507V510M655.5,506V510M656.5,506V510M657.5,507V510M658.5,507V510M659.5,507V511M660.5,507V511M661.5,507V510M662.5,506V510M663.5,506V510M664.5,507V510M665.5,507V510M666.5,506V511M667.5,506V511M668.5,506V509M669.5,506V509M670.5,505V509M671.5,506V509M672.5,506V509M673.5,506V510M674.5,506V510M675.5,506V509M676.5,506V509M677.5,505V509M678.5,505V509M679.5,506V509M680.5,506V510M681.5,506V510M682.5,506V510M683.5,506V509M684.5,505V509M685.5,505V509M686.5,506V509M687.5,506V509M688.5,506V510M689.5,505V510M690.5,505V509M691.5,505V508M692.5,504V508M693.5,505V508M694.5,505V508M695.5,505V509M696.5,505V509M697.5,505V508M698.5,505V508M699.5,504V508M700.5,504V508M701.5,505V508M702.5,505V509M703.5,505V509M704.5,505V509M705.5,505V508M706.5,504V508M707.5,504V508M708.5,505V508M709.5,505V508M710.5,505V509M711.5,505V509M712.5,505V508M713.5,504V508M714.5,504V508M715.5,504V508M716.5,504V508M717.5,504V508M718.5,504V508M719.5,504V507M720.5,504V507M721.5,503V507M722.5,503V507M723.5,504V507M724.5,504V508M725.5,504V508M726.5,504V507M727.5,504V507M728.5,503V507M729.5,503V507M730.5,504V507M731.5,504V507M732.5,504V508M733.5,504V508M734.5,504V507M735.5,503V507M736.5,503V507M737.5,504V507M738.5,504V507M739.5,504V508M740.5,504V508M741.5,504V507M742.5,503V507M743.5,502V507M744.5,503V506M745.5,503V506M746.5,503V507M747.5,503V507M748.5,503V506M749.5,503V506M750.5,502V506M751.5,502V506M752.5,503V506M753.5,503V507M754.5,503V507M755.5,503V507M756.5,503V506M757.5,502V506M758.5,502V506M759.5,503V506M760.5,503V506M761.5,503V507M762.5,503V507M763.5,503V506M764.5,503V506M765.5,502V506M766.5,503V506M767.5,503V506M768.5,503V507M769.5,502V507M770.5,502V506M771.5,502V505M772.5,501V505M773.5,501V505M774.5,502V505M775.5,502V506M776.5,502V506M777.5,502V506M778.5,502V505M779.5,501V505M780.5,501V505M781.5,502V505M782.5,502V505M783.5,502V506M784.5,502V506M785.5,502V505M786.5,501V505M787.5,501V505M788.5,502V505M789.5,502V505M790.5,502V506M791.5,502V506M792.5,502V505M793.5,502V505M794.5,501V505M795.5,501V505M796.5,501V505M797.5,501V506M798.5,501V505M799.5,501V504M800.5,501V504M801.5,500V504M802.5,500V504M803.5,501V504M804.5,501V504M805.5,501V505M806.5,501V505M807.5,501V504M808.5,500V504M809.5,500V504M810.5,501V504M811.5,501V504M812.5,501V505M813.5,501V505M814.5,501V504M815.5,501V504M816.5,500V504M817.5,501V504M818.5,501V504M819.5,501V505M820.5,501V505M821.5,501V504M822.5,500V504M823.5,499V504M824.5,499V503M825.5,500V503M826.5,500V504M827.5,500V504M828.5,500V504M829.5,500V503M830.5,499V503M831.5,499V503M832.5,500V503M833.5,500V503M834.5,500V504M835.5,500V504M836.5,500V503M837.5,500V503M838.5,499V503M839.5,500V503M840.5,500V503M841.5,500V504M842.5,500V504M843.5,500V503M844.5,500V503M845.5,499V503M846.5,499V503M847.5,500V503M848.5,500V504M849.5,500V504M850.5,500V504M851.5,500V503M852.5,499V503M853.5,499V503M854.5,500V503M855.5,500V503M856.5,499V504M857.5,499V504M858.5,499V503M859.5,498V503M860.5,498V503M861.5,499V503M862.5,499V503M863.5,499V503M864.5,499V503M865.5,499V503M866.5,499V503M867.5,498V503M868.5,498V503M869.5,499V503M870.5,499V503M871.5,499V503M872.5,499V503M873.5,499V503M874.5,498V503M875.5,498V503M876.5,499V503M877.5,499V503M878.5,499V503M879.5,499V503M880.5,499V502M881.5,498V502M882.5,498V502M883.5,499V502M884.5,499V502M885.5,499V503M886.5,499V503M887.5,499V502M888.5,499V502M889.5,498V502M890.5,498V502M891.5,498V502M892.5,498V502M893.5,498V502M894.5,498V502M895.5,498V502M896.5,497V502M897.5,497V502M898.5,498V502M899.5,498V502M900.5,498V502M901.5,498V502M902.5,498V502M903.5,497V502M904.5,497V502M905.5,498V502M906.5,498V502M907.5,498V502M908.5,498V502M909.5,498V502M910.5,498V502M911.5,497V502M912.5,498V501M913.5,498V501M914.5,498V502M915.5,498V502M916.5,498V501M917.5,498V501M918.5,497V501M919.5,497V501M920.5,498V501M921.5,498V502M922.5,498V502M923.5,498V502M924.5,498V501M925.5,496V501M926.5,496V501M927.5,497V501M928.5,497V501M929.5,497V501M930.5,497V501M931.5,497V501M932.5,496V501M933.5,496V501M934.5,497V501M935.5,497V501M936.5,497V501M937.5,497V501M938.5,497V501M939.5,497V501M940.5,496V501M941.5,496V501M942.5,497V501M943.5,497V501M944.5,497V501M945.5,497V501M946.5,497V501M947.5,496V500M948.5,496V500M949.5,497V500M950.5,497V500M951.5,497V501M952.5,497V501M953.5,497V500M954.5,496V500M955.5,496V500M956.5,497V500M957.5,497V500M958.5,497V501M959.5,497V501M960.5,497V500M961.5,497V500M962.5,496V500M963.5,497V500M964.5,497V500M965.5,497V501M966.5,496V501M967.5,496V500M968.5,496V500M969.5,495V500M970.5,495V500M971.5,496V500M972.5,496V500M973.5,496V500M974.5,496V500M975.5,496V500M976.5,495V500M977.5,495V500M978.5,496V500M979.5,496V500M980.5,496V500M981.5,496V500M982.5,496V500M983.5,496V500M984.5,495V500M985.5,496V500M986.5,496V500M987.5,496V500M988.5,496V500M989.5,496V500M990.5,496V500M991.5,495V500M992.5,495V500M993.5,496V500M994.5,496V500M995.5,496V500M996.5,496V500M997.5,496V500M998.5,495V500M999.5,495V500M1000.5,496V500M1001.5,496V500M1002.5,496V500M1003.5,496V500M1004.5,496V499M1005.5,495V499M1006.5,495V499M1007.5,496V499M1008.5,496V499M1009.5,496V500M1010.5,496V500M1011.5,496V499M1012.5,496V499M1013.5,495V499M1014.5,495V499M1015.5,496V499M1016.5,496V500M1017.5,496V500M1018.5,496V499M1019.5,496V499M1020.5,495V499M1021.5,495V499M1022.5,496V499M1023.5,496V499M1024.5,495V500M1025.5,495V500M1026.5,495V499M1027.5,494V499M1028.5,494V499M1029.5,495V499M1030.5,495V499M1031.5,495V499M1032.5,495V499M1033.5,495V499M1034.5,495V499M1035.5,494V499M1036.5,495V499M1037.5,495V499M1038.5,495V499M1039.5,495V499M1040.5,495V499M1041.5,495V499M1042.5,494V499M1043.5,494V499M1044.5,495V499M1045.5,495V499M1046.5,495V499M1047.5,495V499M1048.5,495V499M1049.5,494V499M1050.5,494V499M1051.5,495V499M1052.5,495V499M1053.5,495V499M1054.5,495V499M1055.5,495V499M1056.5,495V499M1057.5,494V499M1058.5,495V499M1059.5,495V498M1060.5,495V499M1061.5,495V499M1062.5,495V498M1063.5,495V498M1064.5,494V498M1065.5,494V498M1066.5,495V498M1067.5,495V499M1068.5,495V499M1069.5,495V499M1070.5,495V498M1071.5,494V498M1072.5,494V498M1073.5,495V498M1074.5,495V498M1075.5,495V499M1076.5,495V499M1077.5,495V498M1078.5,494V498M1079.5,494V498M1080.5,495V498M1081.5,495V498M1082.5,495V499M1083.5,495V499M1084.5,495V498M1085.5,495V498M1086.5,494V498M1087.5,494V498M1088.5,495V498M1089.5,495V499M1090.5,495V499M1091.5,495V498M1092.5,495V498M1093.5,494V498M1094.5,494V498M1095.5,495V498M1096.5,495V498M1097.5,495V499M1098.5,495V499M1099.5,495V498M1100.5,494V498M1101.5,494V498M1102.5,495V498M1103.5,495V498M1104.5,495V499M1105.5,495V499M1106.5,495V498M1107.5,495V498M1108.5,494V498M1109.5,495V498M1110.5,495V498M1111.5,495V499M1112.5,495V499M1113.5,495V498M1114.5,495V498M1115.5,494V498M1116.5,494V498M1117.5,495V498M1118.5,495V499M1119.5,495V499M1120.5,495V499M1121.5,495V498M1122.5,494V498M1123.5,494V498M1124.5,495V498M1125.5,495V498M1126.5,495V499M1127.5,495V499M1128.5,495V498M1129.5,495V498M1130.5,494V498M1131.5,495V498M1132.5,495V498M1133.5,495V499M1134.5,495V499M1135.5,495V498M1136.5,495V498M1137.5,494V498M1138.5,494V498M1139.5,495V498M1140.5,495V499M1141.5,495V499M1142.5,495V499M1143.5,495V498M1144.5,494V498M1145.5,494V498M1146.5,495V498M1147.5,495V498M1148.5,495V499M1149.5,495V499M1150.5,495V498M1151.5,494V498M1152.5,494V498M1153.5,495V498M1154.5,495V498M1155.5,495V499M1156.5,495V499M1157.5,495V498M1158.5,495V498M1159.5,494V498M1160.5,494V498M1161.5,495V498M1162.5,495V499M1163.5,495V499M1164.5,495V498M1165.5,495V498M1166.5,494V498M1167.5,494V498M1168.5,495V498M1169.5,495V498M1170.5,495V499M1171.5,495V499M1172.5,495V498M1173.5,494V498M1174.5,494V498M1175.5,495V498M1176.5,495V498M1177.5,495V499M1178.5,495V499M1179.5,495V498M1180.5,495V498M1181.5,494V498M1182.5,495V498M1183.5,495V498M1184.5,495V499M1185.5,495V499M1186.5,495V498M1187.5,495V498M1188.5,494V498M1189.5,494V498M1190.5,495V498M1191.5,495V499M1192.5,495V499M1193.5,495V499M1194.5,495V498M1195.5,494V498M1196.5,494V498M1197.5,495V498M1198.5,495V498M1199.5,495V499M1200.5,495V499M1201.5,495V498M1202.5,495V498M1203.5,494V498M1204.5,495V498M1205.5,495V498M1206.5,495V498M1207.5,495V498M1208.5,495V498M1209.5,495V498M1210.5,494V498M1211.5,494V498M1212.5,495V498M1213.5,495V498M1214.5,495V498M1215.5,495V498M1216.5,495V498M1217.5,494V498M1218.5,494V498M1219.5,495V498M1220.5,495V498M1221.5,495V498M1222.5,495V498M1223.5,495V498M1224.5,494V498M1225.5,494V498M1226.5,495V498M1227.5,495V498M1228.5,495V498M1229.5,495V498M1230.5,495V498M1231.5,495V498M1232.5,494V498M1233.5,494V498M1234.5,495V498M1235.5,495V498M1236.5,495V498M1237.5,495V498M1238.5,495V498M1239.5,494V498M1240.5,494V498M1241.5,495V498M1242.5,495V498M1243.5,495V498M1244.5,495V498M1245.5,495V498M1246.5,494V498M1247.5,494V498M1248.5,495V498M1249.5,495V498M1250.5,495V498M1251.5,495V498M1252.5,495V498M1253.5,495V498M1254.5,494V498M1255.5,495V498M1256.5,495V498M1257.5,495V498M1258.5,495V498M1259.5,495V498M1260.5,495V498M1261.5,494V498M1262.5,494V498M1263.5,495V498M1264.5,495V498M1265.5,495V498M1266.5,495V498M1267.5,495V498M1268.5,494V498M1269.5,494V498M1270.5,495V498M1271.5,495V498M1272.5,495V498M1273.5,495V498M1274.5,495V498M1275.5,495V498M1276.5,494V498M1277.5,495V498M1278.5,495V498M1279.5,495V498M1280.5,495V498M1281.5,495V498M1282.5,495V498M1283.5,494V498M1284.5,494V498M1285.5,495V498M1286.5,495V498M1287.5,495V498M1288.5,495V498M1289.5,495V498M1290.5,494V498M1291.5,494V498M1292.5,495V498M1293.5,495V498M1294.5,495V498M1295.5,495V498M1296.5,495V498M1297.5,494V498M1298.5,494V498M1299.5,495V498M1300.5,495V498M1301.5,495V498M1302.5,495V498M1303.5,495V498M1304.5,495V498M1305.5,494V498M1306.5,494V498M1307.5,495V498M1308.5,495V498M1309.5,495V498M1310.5,495V498M1311.5,495V498M1312.5,494V498M1313.5,494V498M1314.5,495V498M1315.5,495V498M1316.5,495V498" fill="none" stroke="#f00" stroke-width="1" shape-rendering="crispEdges"/>
<text x="92" y="92" class="lab" style="fill:#f00">Upv1</text>
<text x="92.5" y="370" class="lab" style="fill:#f00">I(Ipv1)</text>
<g class="lab" text-anchor="end">
<text x="79.6" y="126">1000</text>
<text x="79.6" y="167">800</text>
<text x="79.6" y="208">600</text>
<text x="79.6" y="249">400</text>
<text x="79.6" y="290">200</text>
<text x="79.6" y="331">0</text>
<text x="79.6" y="402.5">80</text>
<text x="79.6" y="452.5">60</text>
<text x="79.6" y="502.5">40</text>
<text x="79.6" y="552.5">20</text>
<text x="79.6" y="602.5">0</text>
</g>
<g class="lab" text-anchor="middle">
<text x="91.8" y="634">0</text>
<text x="336.5" y="634">0.2</text>
<text x="581.5" y="634">0.4</text>
<text x="826.5" y="634">0.6</text>
<text x="1071.5" y="634">0.8</text>
<text x="1316" y="634">1</text>
<text x="704" y="648">Time (s)</text>
</g>
</svg>
</body></html>
